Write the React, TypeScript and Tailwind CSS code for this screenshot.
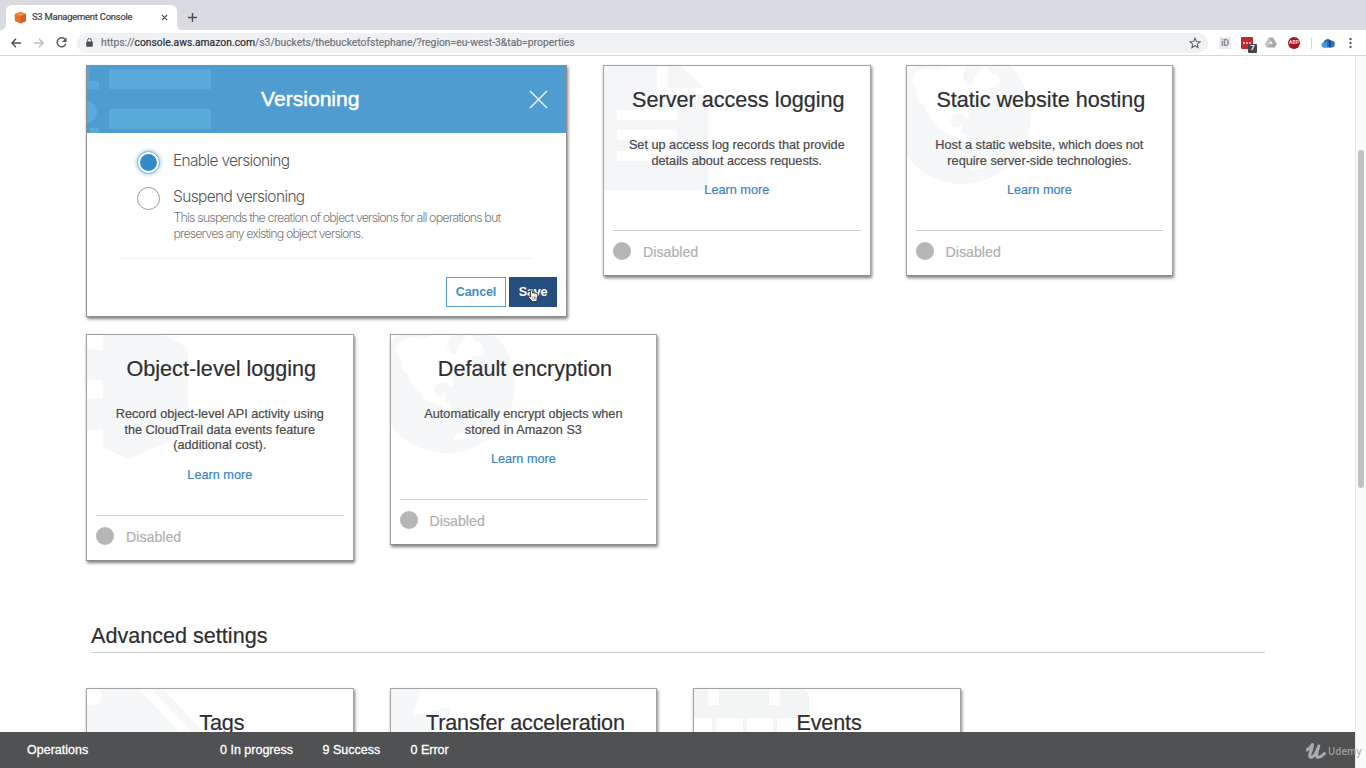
import type { ReactNode } from "react";

function Globe() {
  return (
    <svg className="absolute left-0 top-0" width="130" height="125" viewBox="0 0 130 125">
      <circle cx="55" cy="49" r="69" fill="#f5f7f8" />
      <path
        fill="#fff"
        d="M4 14 L9 6 L18 2 L30 4 L44 0 L60 0 L57 5 L56 12 L60 18 L65 19 L67 11 L72 6 L75 1 L80 0 L84 7 L90 8 L94 15 L88 21 L81 22 L79 28 L72 31 L66 38 L61 44 L62 51 L59 52 L55 47 L47 48 L43 54 L45 61 L51 61 L55 57 L54 66 L60 70 L62 76 L57 75 L49 71 L40 67 L33 64 L29 58 L24 52 L19 46 L17 40 L11 35 L10 25 Z"
      />
      <path fill="#fff" d="M63 101 L70 98 L82 97 L76 103 L63 105 Z" />
    </svg>
  );
}

function DocumentArt() {
  return (
    <svg className="absolute left-0 top-0" width="110" height="125" viewBox="0 0 110 125">
      <path fill="#f5f6f8" d="M0 0 H53 V28 H104 V124 H0 Z" />
      <path fill="#f5f6f8" d="M64 0 H76 L101 22 H64 Z" />
      <path stroke="#fff" strokeWidth="10" d="M13 49 H73 M13 69 H73 M13 90 H73" />
    </svg>
  );
}

function HexArt() {
  return (
    <svg className="absolute left-0 top-0" width="110" height="128" viewBox="0 0 110 128">
      <path fill="#f5f7f8" d="M16 0 H77 L101 13 V99 L41 124 L16 112 V94 L0 96 V63 H16 V45 H0 V13 L16 16 Z" />
    </svg>
  );
}

function TagArt() {
  return (
    <svg className="absolute left-0 top-0" width="130" height="60" viewBox="0 0 130 60">
      <path fill="#f5f7f8" d="M0 0 H52 L106 58 H0 Z M64 0 H76 L131 58 H119 Z" />
      <circle cx="6" cy="7" r="9" fill="#fff" />
    </svg>
  );
}

function BoltArt() {
  return (
    <svg className="absolute left-0 top-0" width="80" height="60" viewBox="0 0 80 60">
      <path fill="#f5f7f8" d="M0 0 H30 L22 26 L55 19 Q62 19 59 23 L30 60 H0 Z" />
    </svg>
  );
}

function CalendarArt() {
  return (
    <svg className="absolute left-0 top-0" width="120" height="60" viewBox="0 0 120 60">
      <path fill="#f3f5f5" d="M0 0 H108 Q115 1 115 9 V29 H0 Z M18 29 H22 V60 H18 Z M49 29 H53 V60 H49 Z M79 29 H83 V60 H79 Z" />
      <path fill="#fff" d="M14 0 H25 V14 Q25 16 23 16 H16 Q14 16 14 14 Z M75 0 H86 V14 Q86 16 84 16 H77 Q75 16 75 14 Z" />
    </svg>
  );
}

const cardBase =
  "relative w-[267.6px] shrink-0 overflow-hidden border border-[#a3a3a3] border-b-[#8c8c8c] bg-white shadow-[1px_2px_3px_rgba(0,0,0,0.5)]";

const titleStyle = "whitespace-nowrap text-[21.6px] leading-8 text-[#2d2f31] [-webkit-text-stroke:0.2px_#2d2f31]";

function Card({ title, lines, art }: { title: string; lines: string[]; art: ReactNode }) {
  return (
    <section className={cardBase}>
      {art}
      <div className="relative flex flex-col items-stretch text-center">
        <h3 className={`mt-[18px] h-8 pl-[3px] ${titleStyle}`}>{title}</h3>
        <div className="mt-[22px] text-[12.7px] leading-[15.7px] text-[#4a4a4a] [-webkit-text-stroke:0.2px_#4a4a4a]">
          {lines.map((l) => (
            <p key={l} className="whitespace-nowrap">{l}</p>
          ))}
        </div>
        <a className="mt-[13px] text-[12.7px] leading-4 text-[#3b84c0] [-webkit-text-stroke:0.2px_#3b84c0]">Learn more</a>
        <div className="mx-[9px] mt-[31.6px] h-px bg-[#cfcfcf]" />
        <div className="mt-[10px] flex h-[34px] items-start pl-[9px]">
          <span className="mt-px size-[18px] rounded-full bg-[#b7b5b6]" />
          <span className="ml-3 text-[14.2px] leading-[22px] text-[#b0b0b0] [-webkit-text-stroke:0.2px_#b0b0b0]">Disabled</span>
        </div>
      </div>
    </section>
  );
}

function TallCard({ title, art }: { title: string; art: ReactNode }) {
  return (
    <section className={`${cardBase} h-[210px]`}>
      {art}
      <h3 className={`relative mt-[18px] h-8 pl-[4px] text-center tracking-[-0.15px] ${titleStyle}`}>{title}</h3>
    </section>
  );
}

function VersioningPanel() {
  return (
    <section className="relative flex h-[252px] w-[481px] shrink-0 flex-col border border-[#8f8f8f] bg-white shadow-[1px_2px_3px_rgba(0,0,0,0.5)]">
      <header className="relative flex h-[67px] items-center overflow-hidden bg-[#4e9cd0]">
        <svg className="absolute left-0 top-0" width="130" height="67" viewBox="0 0 130 67">
          <g fill="#58abd9">
            <rect x="22" y="3" width="102" height="20" rx="1.5" />
            <rect x="22" y="43" width="102" height="20" rx="1.5" />
            <rect x="0" y="0" width="3" height="17" opacity=".7" />
            <rect x="0" y="15" width="12" height="8" />
            <circle cx="-2" cy="46" r="12" />
            <rect x="3" y="62" width="9" height="5" />
          </g>
        </svg>
        <h3 className="relative pb-px pl-[174px] text-[21.1px] leading-8 text-white [-webkit-text-stroke:0.5px_white]">Versioning</h3>
        <svg className="relative ml-auto mr-[18px]" width="19" height="19" viewBox="0 0 19 19">
          <path d="M1 1 L18 18 M18 1 L1 18" stroke="#e9f4fa" strokeWidth="1.5" />
        </svg>
      </header>
      <div className="flex h-[58px] flex-col pt-[18px] pl-[50px]">
        <label className="flex h-[22px] items-center">
          <span className="flex size-[23px] shrink-0 items-center justify-center rounded-full border border-[#7db6dd] bg-white shadow-[0_0_4px_#7db9e6]">
            <span className="size-[17px] rounded-full bg-[#348ac7]" />
          </span>
          <span className="ml-[13px] pb-[2px] font-['Inter'] text-[15.5px] leading-5 font-light tracking-[-0.68px] text-[#555]">Enable versioning</span>
        </label>
        <label className="mt-[14px] flex h-[22px] items-center">
          <span className="size-[23px] shrink-0 rounded-full border border-[#999] bg-white" />
          <span className="ml-[13px] pb-[2px] font-['Inter'] text-[15.5px] leading-5 font-light tracking-[-0.63px] text-[#555]">Suspend versioning</span>
        </label>
        <div className="mt-px ml-[36.5px] whitespace-nowrap font-['Inter'] text-[12.5px] leading-4 font-light tracking-[-0.88px] text-[#7a7a7a]">
          <p>This suspends the creation of object versions for all operations but</p>
          <p>
            <span className="tracking-[-0.93px]">preserves any existing object versions.</span>
          </p>
        </div>
      </div>
      <div className="mx-[34px] mt-[67px] h-px bg-[#f1f1f1]" />
      <div className="mt-[18px] mr-[9px] flex justify-end gap-[3px] text-[12.6px] font-bold">
        <button className="h-[30px] w-[60px] border border-[#5b9fce] bg-white text-[#438dc2]">
          <span className="tracking-[-0.15px]">Cancel</span>
        </button>
        <button className="relative h-[30px] w-[48px] bg-[#264d80] text-white">
          <span className="tracking-[-0.2px]">Save</span>
          <svg className="absolute left-[18px] top-[12px]" width="12" height="14" viewBox="0 0 12 14">
            <path
              d="M3.2 1.2 Q4.5 .2 5.1 1.6 L5.7 4 Q7 3.3 7.5 4.2 Q8.6 3.6 9.2 4.6 Q10.5 4.4 10.8 5.8 Q11.2 8 10.2 10.2 L9.8 12.5 L5 12.8 L4.4 11.5 L1.2 8 Q.8 6.8 2.2 6.9 L3.7 8 Z"
              fill="#f4f4f4"
              stroke="#222"
              strokeWidth=".9"
            />
            <path d="M6 7.5 V10.5 M7.6 7.5 V10.5 M9 7.5 V10" stroke="#555" strokeWidth=".6" />
          </svg>
        </button>
      </div>
    </section>
  );
}

function Browser() {
  return (
    <header className="h-[56px] shrink-0 border-b border-[#d9d9dc] bg-white">
      <div className="flex h-[30px] items-end bg-[#dadbe0]">
        <svg className="h-[6px] w-[6px]" viewBox="0 0 6 6"><path d="M6 0 Q6 6 0 6 H6 Z" fill="#fff" /></svg>
        <div className="flex h-[25px] w-[171px] items-center rounded-t-[6px] bg-white">
          <svg className="ml-2 shrink-0" width="13" height="13" viewBox="0 0 13 13">
            <path d="M6.5 .7 L12 3 V10 L6.5 12.5 L.8 10 V3 Z" fill="#e4702a" />
            <path d="M6.5 .7 L12 3 L6.5 5.3 L.8 3 Z" fill="#f19043" />
            <path d="M6.5 5.3 L12 3 V10 L6.5 12.5 Z" fill="#d95b26" />
          </svg>
          <span className="ml-[5px] whitespace-nowrap font-['Roboto'] text-[9.4px] tracking-[-0.21px] text-[#3d4045] [-webkit-text-stroke:0.2px_#3d4045]">S3 Management Console</span>
          <svg className="ml-auto mr-[9px]" width="7" height="7" viewBox="0 0 7 7"><path d="M.8 .8 L6.2 6.2 M6.2 .8 L.8 6.2" stroke="#505459" strokeWidth="1.2" /></svg>
        </div>
        <svg className="h-[6px] w-[6px]" viewBox="0 0 6 6"><path d="M0 0 Q0 6 6 6 H0 Z" fill="#fff" /></svg>
        <svg className="mb-2 ml-[5px]" width="9" height="9" viewBox="0 0 9 9"><path d="M4.5 0 V9 M0 4.5 H9" stroke="#4b4f54" strokeWidth="1.4" /></svg>
      </div>
      <div className="flex h-[25px] items-center">
        <svg className="ml-[11px]" width="10" height="10" viewBox="0 0 10 10"><path d="M10 5 H1 M5 .8 L.9 5 L5 9.2" fill="none" stroke="#4d5156" strokeWidth="1.4" /></svg>
        <svg className="ml-[13px]" width="10" height="10" viewBox="0 0 10 10"><path d="M0 5 H9 M5 .8 L9.1 5 L5 9.2" fill="none" stroke="#b9bbbf" strokeWidth="1.4" /></svg>
        <svg className="ml-[12px]" width="11" height="11" viewBox="0 0 11 11">
          <path d="M9.3 2.6 A4.5 4.5 0 1 0 9.9 6.8" fill="none" stroke="#55595e" strokeWidth="1.4" />
          <path d="M10.6 .4 V5 H6 Z" fill="#55595e" />
        </svg>
        <div className="ml-[10px] flex h-[20px] w-[1131px] items-center rounded-full bg-[#f0f1f4]">
          <svg className="ml-[9px]" width="7" height="9" viewBox="0 0 7 9">
            <rect x=".2" y="3.4" width="6.6" height="5.3" rx=".7" fill="#4b4f54" />
            <path d="M1.6 3.6 V2.3 A1.9 1.9 0 0 1 5.4 2.3 V3.6" fill="none" stroke="#4b4f54" />
          </svg>
          <span className="ml-[8px] whitespace-nowrap font-['Roboto'] text-[10.3px] tracking-[0.02px] text-[#70757a] [-webkit-text-stroke:0.2px_#70757a]">
            https://<span className="text-[#2b2e32] [-webkit-text-stroke:0.2px_#2b2e32]">console.aws.amazon.com</span>/s3/buckets/thebucketofstephane/?region=eu-west-3&amp;tab=properties
          </span>
          <svg className="ml-auto mr-[7px]" width="12" height="12" viewBox="0 0 12 12">
            <path d="M6 1.2 L7.4 4.5 L11 4.8 L8.3 7.1 L9.1 10.6 L6 8.7 L2.9 10.6 L3.7 7.1 L1 4.8 L4.6 4.5 Z" fill="none" stroke="#5f6368" strokeWidth="1.1" />
          </svg>
        </div>
        <span className="ml-[11px] flex h-3 w-3 items-center justify-center bg-[#ececee] font-['Roboto'] text-[9px] leading-3 font-bold text-[#85878b]">iD</span>
        <div className="relative ml-[10px] h-3 w-3 rounded-[1px] bg-[#c12b2f]">
          <svg className="absolute left-0 top-0" width="12" height="12" viewBox="0 0 12 12"><path d="M2 6 H10" stroke="#fbdada" strokeWidth="1.6" strokeDasharray="2 1" /></svg>
          <span className="absolute left-[7px] top-[7px] flex h-[9px] w-[9px] items-center justify-center rounded-[1px] bg-[#454545] font-['Roboto'] text-[8px] leading-none font-bold text-white">7</span>
        </div>
        <svg className="ml-[12px]" width="12" height="11" viewBox="0 0 12 11">
          <path d="M4 .5 H8 L11.8 7 L10 10.5 H2 L.2 7 Z" fill="#a9a9a9" />
          <path d="M4 .5 L7 5.5 L2 10.5 L.2 7 Z" fill="#c2c2c2" />
          <path d="M6 4 L7.8 7 H4.2 Z" fill="#f3f3f3" />
        </svg>
        <span className="ml-[11px] flex h-3 w-3 items-center justify-center rounded-full bg-[#ad1416] font-['Roboto'] text-[5px] leading-none font-bold text-[#f5dada]">ABP</span>
        <span className="ml-[11px] h-3 w-px bg-[#d5d7da]" />
        <svg className="ml-[9px]" width="14" height="10" viewBox="0 0 14 10">
          <path d="M3 9.5 A2.7 2.7 0 0 1 2.6 4.2 A4 4 0 0 1 9.6 2.6 A3.4 3.4 0 0 1 13.8 6.2 A3 3 0 0 1 11.5 9.5 Z" fill="#2e6fb8" />
          <path d="M3 9.5 A2.7 2.7 0 0 1 2.6 4.2 L6 4 L6 9.5 Z" fill="#459ad8" />
          <path d="M7.5 1 L10 3 L9.5 9.5 H8 Z" fill="#1d4d8d" />
        </svg>
        <svg className="ml-[14px]" width="3" height="12" viewBox="0 0 3 12"><g fill="#5a5e63"><circle cx="1.5" cy="2" r="1.2" /><circle cx="1.5" cy="6" r="1.2" /><circle cx="1.5" cy="10" r="1.2" /></g></svg>
      </div>
    </header>
  );
}

export default function App() {
  return (
    <div className="relative flex h-[768px] w-[1366px] flex-col overflow-hidden bg-white font-['Liberation_Sans',Arial,sans-serif]">
      <Browser />
      <div className="flex min-h-0 flex-1">
        <div className="flex w-[1355px] shrink-0 flex-col">
          <main className="h-[676px] overflow-hidden pt-[9px] pl-[86px]">
            <div className="flex items-start gap-9">
              <VersioningPanel />
              <Card title="Server access logging" lines={["Set up access log records that provide", "details about access requests."]} art={<DocumentArt />} />
              <div className="-ml-px">
                <Card title="Static website hosting" lines={["Host a static website, which does not", "require server-side technologies."]} art={<Globe />} />
              </div>
            </div>
            <div className="mt-[17px] flex h-[227px] items-start gap-9">
              <Card
                title="Object-level logging"
                lines={["Record object-level API activity using", "the CloudTrail data events feature", "(additional cost)."]}
                art={<HexArt />}
              />
              <Card title="Default encryption" lines={["Automatically encrypt objects when", "stored in Amazon S3"]} art={<Globe />} />
            </div>
            <h2 className="mt-[60px] ml-[5px] h-[32px] w-[1174px] border-b border-[#cdcdcd] text-[21.6px] leading-[30px] text-[#2d2f31] [-webkit-text-stroke:0.2px_#2d2f31]">Advanced settings</h2>
            <div className="mt-[35px] flex items-start gap-9">
              <TallCard title="Tags" art={<TagArt />} />
              <TallCard title="Transfer acceleration" art={<BoltArt />} />
              <TallCard title="Events" art={<CalendarArt />} />
            </div>
          </main>
          <footer className="flex h-9 items-center bg-[#505153] text-[12.5px] text-white [-webkit-text-stroke:0.3px_white]">
            <span className="ml-[27px] w-[193px]">Operations</span>
            <span className="w-[102.5px]">0 In progress</span>
            <span className="w-[88px]">9 Success</span>
            <span>0 Error</span>
          </footer>
        </div>
        <div className="w-[11px] border-l border-[#e8e8e8] bg-[#fafafa] pt-[94px] pl-[2px]">
          <div className="h-[338px] w-[6px] rounded-full bg-[#c1c1c1]" />
        </div>
      </div>
      <div className="absolute left-[1306px] top-[743px] flex items-center text-[#a9aaab]">
        <svg width="20" height="17" viewBox="0 0 20 17">
          <path d="M1 7 Q5 4 6.5 1.5 Q6.5 5 4.2 10 Q2.8 14.5 5.2 14.4 Q8.5 14 11.5 6 L12.8 3 Q9 14.4 12 14.3 Q15 14.3 18.5 10.5" fill="none" stroke="#a9aaab" strokeWidth="3" strokeLinecap="round" strokeLinejoin="round" />
        </svg>
        <span className="ml-[2px] font-['Open_Sans'] text-[9.8px] leading-4 font-semibold text-[#a9aaab]/90">Udemy</span>
      </div>
    </div>
  );
}
